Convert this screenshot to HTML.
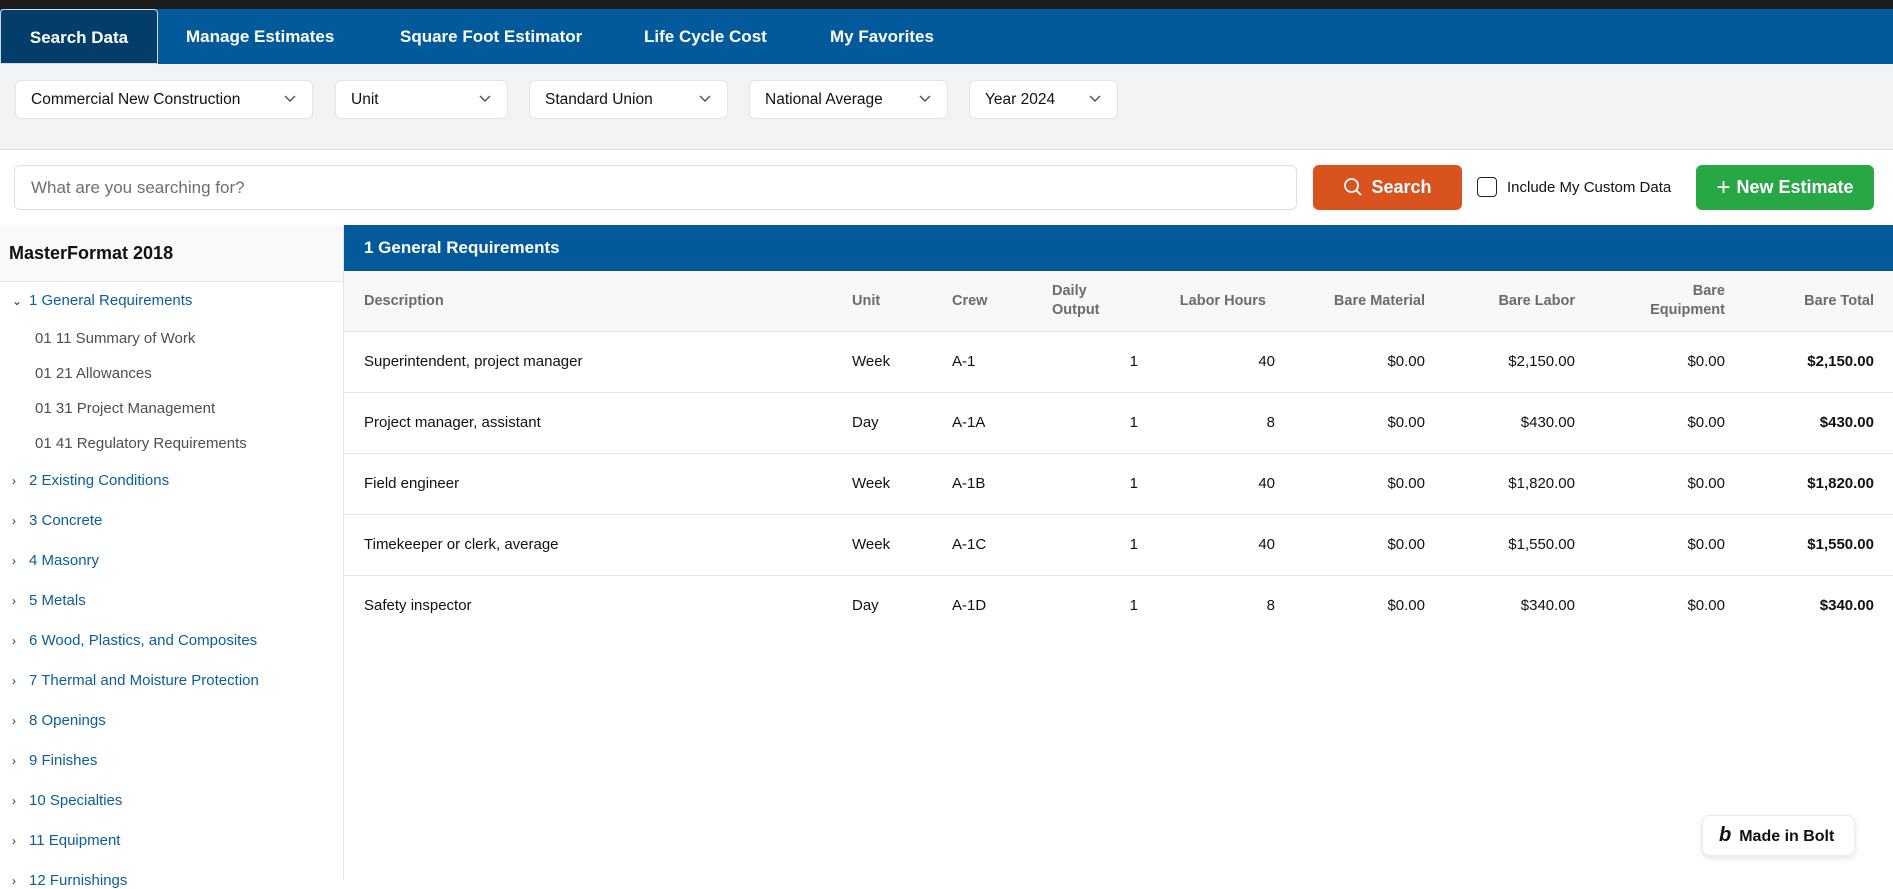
<!DOCTYPE html>
<html><head><meta charset="utf-8"><style>
*{box-sizing:border-box;margin:0;padding:0}
body{width:1893px;height:880px;overflow:hidden;font-family:"Liberation Sans",sans-serif;background:#fff;position:relative;color:#111}
.a{position:absolute}
.top{left:0;top:0;width:1893px;height:9px;background:#1c1c1c}
.nav{left:0;top:9px;width:1893px;height:55px;background:#035a9b}
.tab{position:absolute;top:0;height:55px;line-height:55px;color:#fff;font-size:17px;font-weight:bold}
.act{left:0;width:158px;background:#033e6b;border:1px solid #cfd8e3;border-radius:4px 4px 0 0;text-align:center}
.filt{left:0;top:64px;width:1893px;height:86px;background:#f2f3f5;border-bottom:1px solid #e2e4e8}
.dd{position:absolute;top:16px;height:39px;background:#fff;border:1px solid #e1e3e7;border-radius:6px;font-size:15.5px;line-height:37px;padding-left:15px;color:#111}
.dd svg{position:absolute;right:16px;top:14px}
.inp{left:14px;top:165px;width:1283px;height:45px;border:1px solid #dcdfe3;border-radius:6px;font-size:17px;color:#6b6f75;line-height:43px;padding-left:16px}
.btn{top:165px;height:45px;border-radius:6px;color:#fff;font-size:18px;font-weight:bold;line-height:45px;text-align:center}
.side{left:0;top:225px;width:344px;height:655px;border-right:1px solid #e2e4e8}
.sh{height:57px;background:#f8f9fa;border-bottom:1px solid #e2e4e8;font-size:18px;font-weight:bold;line-height:56px;padding-left:9px}
.it{position:absolute;left:12px;font-size:15px;color:#0b5d9c}
.it span{display:inline-block;width:17px;color:#333;font-size:12px}
.sub{position:absolute;left:35px;font-size:15px;color:#4a4f57}
.mh{left:344px;top:225px;width:1549px;height:46px;background:#035a9b;color:#fff;font-size:17px;font-weight:bold;line-height:46px;padding-left:20px}
.th{left:344px;top:271px;width:1549px;height:61px;background:#f8f8f8;border-bottom:1px solid #e2e4e8}
.hc{position:absolute;font-size:14.5px;font-weight:bold;color:#6b6b6b;line-height:19px}
.row{position:absolute;left:344px;width:1549px;height:61px;border-bottom:1px solid #e2e4e8;font-size:15px}
.c{position:absolute;top:0;line-height:60px}
.r{text-align:right}
</style></head><body>
<div class="a top"></div>
<div class="a nav">
<div class="tab act">Search Data</div>
<div class="tab" style="left:186px">Manage Estimates</div>
<div class="tab" style="left:400px">Square Foot Estimator</div>
<div class="tab" style="left:644px">Life Cycle Cost</div>
<div class="tab" style="left:830px">My Favorites</div>
</div>
<div class="a filt">
<div class="dd" style="left:15px;width:298px">Commercial New Construction<svg width="12" height="8" viewBox="0 0 12 8"><path d="M1 1l5 5 5-5" fill="none" stroke="#555" stroke-width="1.5"/></svg></div>
<div class="dd" style="left:335px;width:173px">Unit<svg width="12" height="8" viewBox="0 0 12 8"><path d="M1 1l5 5 5-5" fill="none" stroke="#555" stroke-width="1.5"/></svg></div>
<div class="dd" style="left:529px;width:199px">Standard Union<svg width="12" height="8" viewBox="0 0 12 8"><path d="M1 1l5 5 5-5" fill="none" stroke="#555" stroke-width="1.5"/></svg></div>
<div class="dd" style="left:749px;width:199px">National Average<svg width="12" height="8" viewBox="0 0 12 8"><path d="M1 1l5 5 5-5" fill="none" stroke="#555" stroke-width="1.5"/></svg></div>
<div class="dd" style="left:969px;width:149px">Year 2024<svg width="12" height="8" viewBox="0 0 12 8"><path d="M1 1l5 5 5-5" fill="none" stroke="#555" stroke-width="1.5"/></svg></div>
</div>
<div class="a inp">What are you searching for?</div>
<div class="a btn" style="left:1313px;width:149px;background:#d9531e"><svg width="20" height="20" viewBox="0 0 20 20" style="vertical-align:-4px;margin-right:8px"><circle cx="8.5" cy="8.5" r="6.5" fill="none" stroke="#fff" stroke-width="1.8"/><path d="M13.5 13.5l4.5 4.5" stroke="#fff" stroke-width="1.8"/></svg>Search</div>
<div class="a" style="left:1477px;top:177px;width:20px;height:20px;border:1.5px solid #222;border-radius:4px"></div>
<div class="a" style="left:1507px;top:178px;font-size:15px;line-height:20px">Include My Custom Data</div>
<div class="a btn" style="left:1696px;width:178px;background:#28a745"><span style="font-weight:normal;font-size:24px;vertical-align:-2px;margin-right:6px">+</span>New Estimate</div>
<div class="a side">
<div class="sh">MasterFormat 2018</div>
<div class="it" style="top:67px"><span>⌄</span>1 General Requirements</div>
<div class="sub" style="top:105px">01 11 Summary of Work</div>
<div class="sub" style="top:140px">01 21 Allowances</div>
<div class="sub" style="top:175px">01 31 Project Management</div>
<div class="sub" style="top:210px">01 41 Regulatory Requirements</div>
<div class="it" style="top:247px"><span>›</span>2 Existing Conditions</div>
<div class="it" style="top:287px"><span>›</span>3 Concrete</div>
<div class="it" style="top:327px"><span>›</span>4 Masonry</div>
<div class="it" style="top:367px"><span>›</span>5 Metals</div>
<div class="it" style="top:407px"><span>›</span>6 Wood, Plastics, and Composites</div>
<div class="it" style="top:447px"><span>›</span>7 Thermal and Moisture Protection</div>
<div class="it" style="top:487px"><span>›</span>8 Openings</div>
<div class="it" style="top:527px"><span>›</span>9 Finishes</div>
<div class="it" style="top:567px"><span>›</span>10 Specialties</div>
<div class="it" style="top:607px"><span>›</span>11 Equipment</div>
<div class="it" style="top:647px"><span>›</span>12 Furnishings</div>
</div>
<div class="a mh">1 General Requirements</div>
<div class="a th">
<div class="hc" style="left:20px;top:21px">Description</div>
<div class="hc" style="left:508px;top:21px">Unit</div>
<div class="hc" style="left:608px;top:21px">Crew</div>
<div class="hc" style="left:708px;top:11px">Daily<br>Output</div>
<div class="hc r" style="right:627px;top:21px">Labor Hours</div>
<div class="hc r" style="right:468px;top:21px">Bare Material</div>
<div class="hc r" style="right:318px;top:21px">Bare Labor</div>
<div class="hc r" style="right:168px;top:11px">Bare<br>Equipment</div>
<div class="hc r" style="right:19px;top:21px">Bare Total</div>
</div>
<div class="row" style="top:332px"><div class="c" style="left:20px">Superintendent, project manager</div><div class="c" style="left:508px">Week</div><div class="c" style="left:608px">A-1</div><div class="c r" style="right:755px">1</div><div class="c r" style="right:618px">40</div><div class="c r" style="right:468px">$0.00</div><div class="c r" style="right:318px">$2,150.00</div><div class="c r" style="right:168px">$0.00</div><div class="c r" style="right:19px;font-weight:bold">$2,150.00</div></div>
<div class="row" style="top:393px"><div class="c" style="left:20px">Project manager, assistant</div><div class="c" style="left:508px">Day</div><div class="c" style="left:608px">A-1A</div><div class="c r" style="right:755px">1</div><div class="c r" style="right:618px">8</div><div class="c r" style="right:468px">$0.00</div><div class="c r" style="right:318px">$430.00</div><div class="c r" style="right:168px">$0.00</div><div class="c r" style="right:19px;font-weight:bold">$430.00</div></div>
<div class="row" style="top:454px"><div class="c" style="left:20px">Field engineer</div><div class="c" style="left:508px">Week</div><div class="c" style="left:608px">A-1B</div><div class="c r" style="right:755px">1</div><div class="c r" style="right:618px">40</div><div class="c r" style="right:468px">$0.00</div><div class="c r" style="right:318px">$1,820.00</div><div class="c r" style="right:168px">$0.00</div><div class="c r" style="right:19px;font-weight:bold">$1,820.00</div></div>
<div class="row" style="top:515px"><div class="c" style="left:20px">Timekeeper or clerk, average</div><div class="c" style="left:508px">Week</div><div class="c" style="left:608px">A-1C</div><div class="c r" style="right:755px">1</div><div class="c r" style="right:618px">40</div><div class="c r" style="right:468px">$0.00</div><div class="c r" style="right:318px">$1,550.00</div><div class="c r" style="right:168px">$0.00</div><div class="c r" style="right:19px;font-weight:bold">$1,550.00</div></div>
<div class="row" style="top:576px;border-bottom:none"><div class="c" style="left:20px">Safety inspector</div><div class="c" style="left:508px">Day</div><div class="c" style="left:608px">A-1D</div><div class="c r" style="right:755px">1</div><div class="c r" style="right:618px">8</div><div class="c r" style="right:468px">$0.00</div><div class="c r" style="right:318px">$340.00</div><div class="c r" style="right:168px">$0.00</div><div class="c r" style="right:19px;font-weight:bold">$340.00</div></div>
<div class="a" style="left:1702px;top:815px;width:153px;height:41px;background:#fff;border:1px solid #e3eef3;border-radius:8px;box-shadow:0 2px 6px rgba(0,0,0,.12);font-size:16px;font-weight:bold;line-height:39px;padding-left:16px"><span style="font-style:italic;font-size:20px;font-weight:900;margin-right:8px">b</span>Made in Bolt</div>
</body></html>
